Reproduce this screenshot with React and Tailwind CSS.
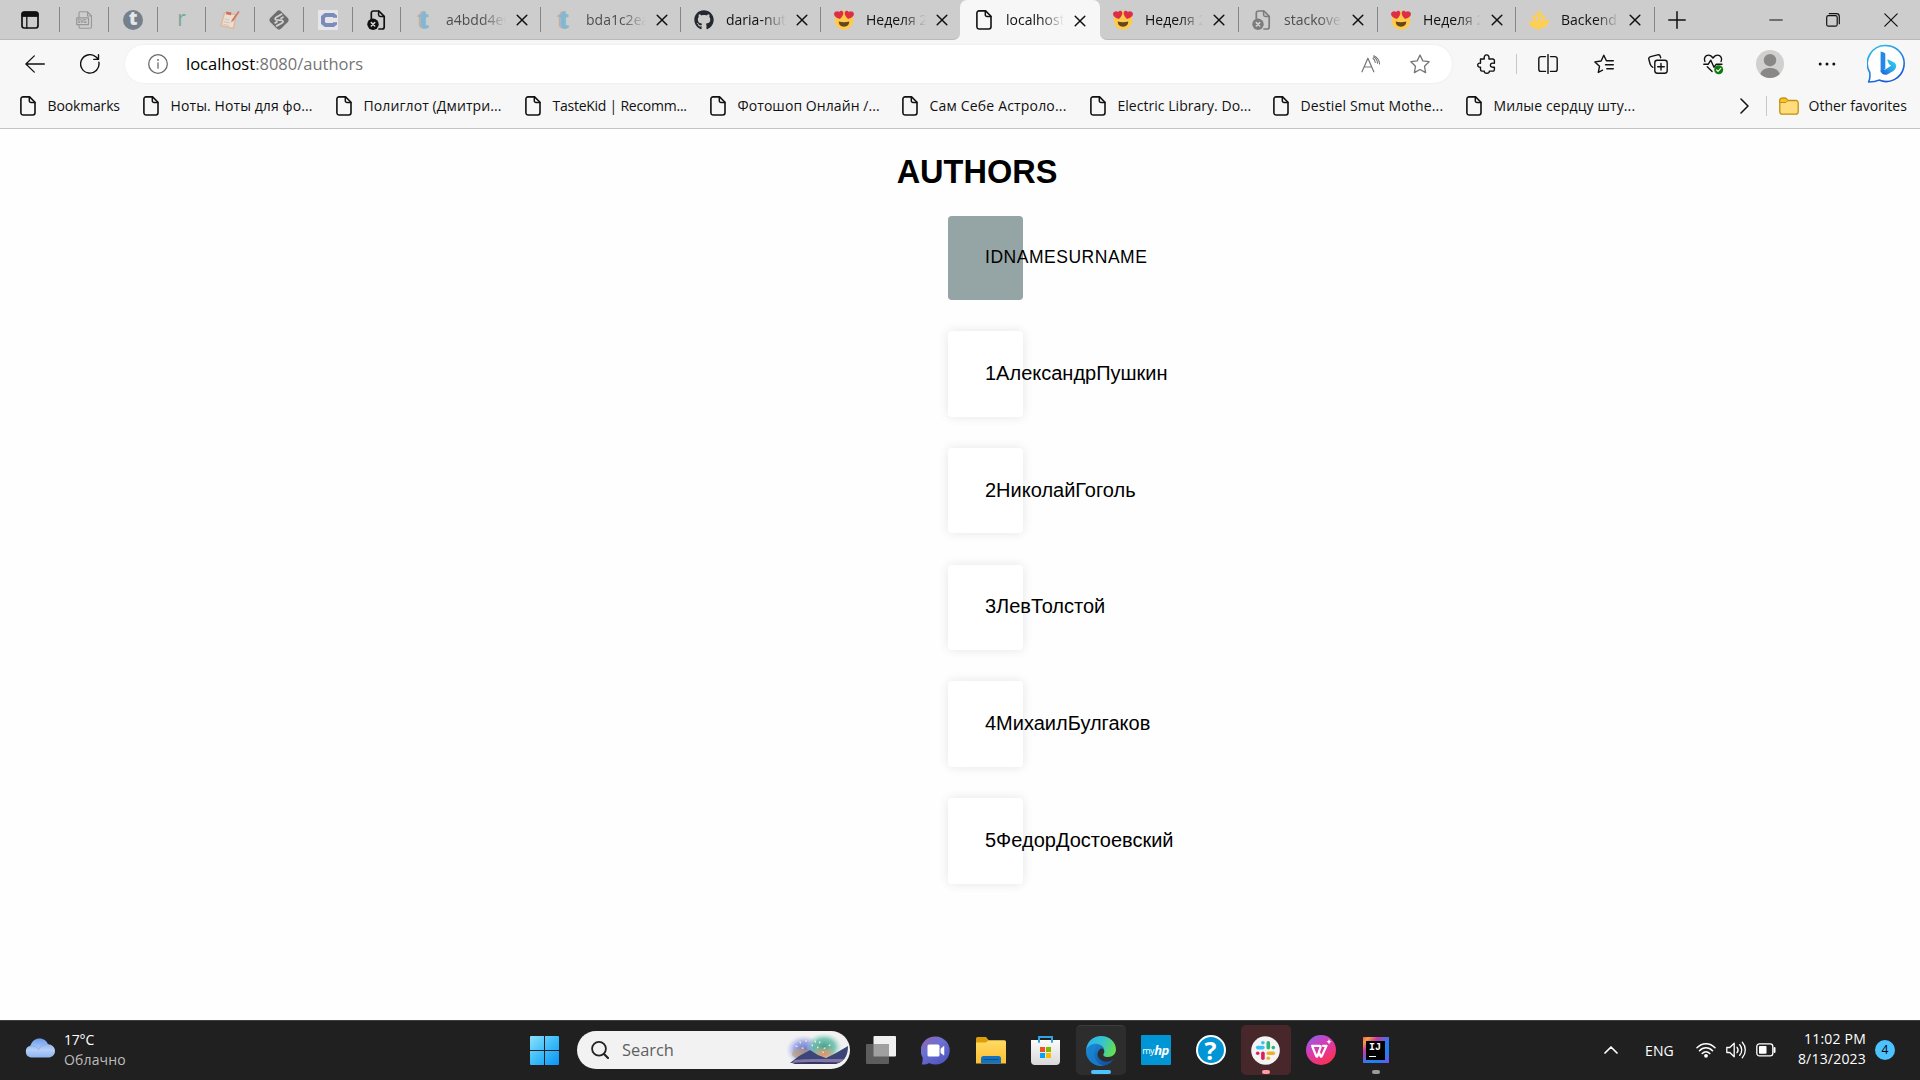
import React from 'react';
import { FaGithub } from 'react-icons/fa';

const Svg = ({ s = 20, w = s, h = s, vb, className = '', children }) => (
  <svg
    width={w}
    height={h}
    viewBox={vb || `0 0 ${w} ${h}`}
    fill="none"
    stroke="currentColor"
    strokeWidth="1.4"
    strokeLinecap="round"
    strokeLinejoin="round"
    className={'shrink-0 ' + className}
  >
    {children}
  </svg>
);

const FileIcon = () => (
  <Svg w={16} h={20}>
    <path d="M3 .9h6.6l5.4 5.4v10.5a2.2 2.2 0 0 1-2.2 2.2H3A2.2 2.2 0 0 1 .9 17V3A2.1 2.1 0 0 1 3 .9Z" strokeWidth="1.6" />
    <path d="M9.3 1.2v3.6a1.7 1.7 0 0 0 1.7 1.7h3.8" strokeWidth="1.5" />
  </Svg>
);

const ErrorFile = ({ className = '' }) => (
  <Svg s={20} className={className}>
    <path d="M4.3 9V3a2 2 0 0 1 2-2h5.6l5.3 5.3V17a2 2 0 0 1-2 2H12" strokeWidth="1.7" />
    <path d="M11.6 1.3v3.4a1.7 1.7 0 0 0 1.7 1.7H17" strokeWidth="1.5" />
    <circle cx="6" cy="14.3" r="5.7" fill="currentColor" stroke="none" />
    <path d="m4.3 12.6 3.4 3.4m0-3.4L4.3 16" stroke="#d6d6d6" strokeWidth="1.5" />
  </Svg>
);

const CloseIcon = () => (
  <Svg s={12}>
    <path d="m1.2 1.2 9.6 9.6m0-9.6-9.6 9.6" strokeWidth="1.5" />
  </Svg>
);

const HeartEyes = () => (
  <Svg s={20}>
    <circle cx="10" cy="10.3" r="9.4" fill="#ffcb4c" stroke="none" />
    <path d="M4.8 11.6c3.2 1 7.200 1 10.400 0 .2 3-1.900 5.100-5.200 5.100s-5.400-2.100-5.200-5.100Z" fill="#65471b" stroke="none" />
    <path d="M9.300 2.700C8.900.6 6.200.2 5.200 2 3.700.600.700 1.200.1 3.500-.4 6.100 2.800 8.200 5.900 8.900c1.900-1.600 3.700-4 3.400-6.200ZM10.700 2.700c.4-2.100 3.100-2.500 4.100-.7 1.500-1.400 4.500-.8 5.100 1.500.5 2.600-2.700 4.700-5.800 5.400-1.900-1.600-3.700-4-3.400-6.200Z" fill="#dd2e44" stroke="none" />
  </Svg>
);

const LetterT = () => (
  <Svg s={20}>
    <text x="3.500" y="18" fontFamily="Liberation Serif, serif" fontSize="27" fontWeight="bold" fill="#c9a789" stroke="#c9ab94" strokeWidth="1">t</text>
    <text x="5" y="18.300" fontFamily="Liberation Serif, serif" fontSize="27" fontWeight="bold" fill="#86b7d0" stroke="#86b7d0" strokeWidth="1.500">t</text>
  </Svg>
);

const Backend = () => (
  <Svg s={20}>
    <path d="M10 .3 13.200 4 11 6v5.500l1.600-.9V7.800l-1-1 2.500-2.600 2.700 2.800-1.400 1.500v2.300l4.500-1.300c0 5-2.600 7.700-6.700 8L10 20l-3.200-1.500c-4.100-.3-6.700-3-6.700-8l4.500 1.300V8.500L3.200 7l2.700-2.800 2.500 2.600-1 1v2.800l1.600.9V6L6.800 4Z" fill="#ffcf54" stroke="none" />
  </Svg>
);

const PINNED = [
  {
    w: 'w-[60px]',
    icon: (
      <Svg w={18} h={18}>
        <rect x="1" y="1" width="16" height="16" rx="2.200" strokeWidth="1.700" />
        <path d="M1 5V3a2 2 0 0 1 2-2h12a2 2 0 0 1 2 2v2Z" fill="currentColor" strokeWidth="1" />
        <path d="M5.800 5v12" strokeWidth="1.300" />
      </Svg>
    ),
  },
  {
    w: 'w-[49px]',
    icon: (
      <Svg w={17} h={18} className="text-[#989898]">
        <path d="M3 6.500V2a1.200 1.200 0 0 1 1.200-1.200h7.300l4 4V16a1.200 1.200 0 0 1-1.200 1.200H4.200A1.200 1.200 0 0 1 3 16v-2M11.500 1v4h4" strokeWidth="1.100" />
        <rect x=".7" y="6.800" width="11.800" height="6.800" strokeWidth="1.200" />
        <text x="1.500" y="12" fontFamily="Open Sans, sans-serif" fontSize="4.800" fontWeight="bold" fill="#8f8f8f" stroke="none">SVG</text>
      </Svg>
    ),
  },
  {
    w: 'w-[49px]',
    icon: (
      <span className="flex h-5 w-5 items-start justify-center rounded-full bg-[#75808c] text-[19px] leading-[17px] font-extrabold text-[#e4e6e8]">t</span>
    ),
  },
  { w: 'w-[48px]', icon: <span className="-mt-1 text-[21px] leading-5 font-medium text-[#78a797]">r</span> },
  {
    w: 'w-[49px]',
    icon: (
      <Svg s={20}>
        <path d="m4.500 2.500 11.500 2.300-2.400 13.700L1 15.800Z" fill="#e9dfd4" stroke="#dfb99f" strokeWidth="1.600" />
        <path d="m6.500 1.500 5 1-.6 2.800-5-1Z" fill="#cf6f62" stroke="none" />
        <path d="M18.200 1 12 9.500l-1 3 2.500-1.800L19.500 2Z" fill="#cf7866" stroke="none" />
        <path d="m5 9 4 1m-4.600 1.800 5 1m-5.600 1.600 5 1.200" stroke="#cdbdae" strokeWidth=".9" />
      </Svg>
    ),
  },
  {
    w: 'w-[49px]',
    icon: (
      <Svg s={20}>
        <path d="M7.800 1.400a3.200 3.200 0 0 1 4.400 0l6.400 6.400a3.200 3.200 0 0 1 0 4.400l-6.400 6.400a3.200 3.200 0 0 1-4.400 0l-6.400-6.400a3.200 3.200 0 0 1 0-4.400Z" fill="#6e6e6e" stroke="none" />
        <path d="M12.500 4.300 7.300 7.200c-1.500.9-1.500 2-.2 2.700l5.800.4c1.500.7 1.500 1.900.1 2.700l-5.300 2.900M13.900 7.300l-1.800 1M6.200 12.900l1.800-1" stroke="#d2d2d2" strokeWidth="1.800" />
      </Svg>
    ),
  },
  {
    w: 'w-[49px]',
    icon: (
      <span className="flex h-5 w-5 items-center justify-center bg-[#e6e6e8]">
        <Svg w={17} h={14}>
          <path d="M15 4.800V3.500L13.200 2H5.500L3 4v6l2.500 2h7.700L15 10.500V9.200" stroke="#7b8cbc" strokeWidth="4" strokeLinecap="butt" strokeLinejoin="miter" />
        </Svg>
      </span>
    ),
  },
  { w: 'w-[48px]', icon: <ErrorFile /> },
];

const TABS_LEFT = [
  { label: 'a4bdd4e6', icon: <LetterT />, dim: true, w: 'w-[140px]' },
  { label: 'bda1c2ea', icon: <LetterT />, dim: true, w: 'w-[140px]' },
  { label: 'daria-nuts', icon: <FaGithub size={20} color="#24292f" />, w: 'w-[140px]' },
  { label: 'Неделя 2', icon: <HeartEyes />, w: 'w-[139px]', last: true },
];
const TABS_RIGHT = [
  { label: 'Неделя 2', icon: <HeartEyes />, w: 'w-[139px]' },
  { label: 'stackover', icon: <ErrorFile className="text-[#7c7c7c]" />, dim: true, w: 'w-[139px]' },
  { label: 'Неделя 2', icon: <HeartEyes />, w: 'w-[138px]' },
  { label: 'Backend3', icon: <Backend />, w: 'w-[139px]' },
];

const Divider = () => <span className="ml-auto h-[25px] w-px shrink-0 bg-[#858585]" />;

function Tab({ label, icon, dim, w, last, tight }) {
  return (
    <div className={'flex h-full shrink-0 items-center pl-[13px] ' + w}>
      <span className="flex w-5 shrink-0 justify-center">{icon}</span>
      <span
        className={
          'ml-[12px] shrink-0 overflow-hidden text-[14px] leading-5 whitespace-nowrap [mask-image:linear-gradient(to_right,black_60%,transparent)] ' +
          (tight ? 'w-[58px] ' : 'w-[60px] ') +
          (dim ? 'text-[#4e4e4e]' : 'text-[#111]')
        }
      >
        {label}
      </span>
      <span className="mt-px ml-[10px]">
        <CloseIcon />
      </span>
      {!last && <Divider />}
    </div>
  );
}

function TabStrip() {
  return (
    <div className="flex h-10 bg-[#f7f7f7]">
      <div className="flex w-[960px] items-center rounded-br-[7px] border-b border-[#b9b9b9] bg-[#cdcdcd]">
        {PINNED.map((p, i) => (
          <div key={i} className={'flex h-full shrink-0 items-center ' + p.w}>
            <span className="flex flex-1 justify-center">{p.icon}</span>
            <Divider />
          </div>
        ))}
        {TABS_LEFT.map((t, i) => (
          <Tab key={i} {...t} />
        ))}
      </div>
      <div className="w-[140px] bg-[#cdcdcd]">
        <div className="flex h-10 items-center rounded-t-[7px] bg-[#f7f7f7] pl-px">
          <Tab label="localhost:" icon={<FileIcon />} w="w-[138px]" last tight />
        </div>
      </div>
      <div className="flex flex-1 items-center rounded-bl-[7px] border-b border-[#b9b9b9] bg-[#cdcdcd]">
        {TABS_RIGHT.map((t, i) => (
          <Tab key={i} {...t} tight />
        ))}
        <Svg s={18} className="ml-[13px]">
          <path d="M9 .8v16.400M.8 9h16.400" strokeWidth="1.500" />
        </Svg>
        <Svg w={14} h={14} className="ml-[83px]">
          <path d="M.8 7h12.400" strokeWidth="1.200" />
        </Svg>
        <Svg w={14} h={14} className="ml-[43px]">
          <rect x=".7" y="2.700" width="10.500" height="10.500" rx="1.800" strokeWidth="1.200" />
          <path d="M3.300.7h7.200a2.800 2.800 0 0 1 2.800 2.800v7.200" strokeWidth="1.200" />
        </Svg>
        <Svg w={14} h={14} className="ml-[44px]">
          <path d="m.8.8 12.400 12.400m0-12.400L.8 13.200" strokeWidth="1.200" />
        </Svg>
      </div>
    </div>
  );
}

const Slot = ({ w, children }) => <div className={'flex shrink-0 items-center justify-center ' + w}>{children}</div>;

function AddressRow() {
  return (
    <div className="flex h-12 items-center">
      <div className="flex w-[125px] shrink-0 items-center pl-[25px]">
        <Svg w={20} h={18}>
          <path d="M9.300.9.9 9l8.400 8.100M1 9h18.300" strokeWidth="1.300" />
        </Svg>
        <Svg s={20} className="ml-[35px]">
          <path d="M18.900 8.300A9.200 9.200 0 1 1 15.700 2.800l2.500 2.300M18.500.8v4.600h-4.700" strokeWidth="1.400" />
        </Svg>
      </div>
      <div className="flex h-[38px] w-[1327px] shrink-0 items-center rounded-full bg-white shadow-[0_0_3px_rgba(0,0,0,0.06)]">
        <Svg s={20} className="ml-[23px] text-[#6b6b6b]">
          <circle cx="10" cy="10" r="9.300" strokeWidth="1.300" />
          <path d="M10 9v5.200" strokeWidth="1.300" />
          <circle cx="10" cy="6" r=".9" fill="currentColor" stroke="none" />
        </Svg>
        <span className="ml-[18px] text-[16.500px] leading-6 text-[#757575]">
          <span className="text-black">localhost</span>:8080/authors
        </span>
        <Svg w={20} h={18} className="mr-[29px] ml-auto text-[#767676]">
          <path d="m1 16.800 5.900-13.600 5.900 13.600M3 12h7.800" strokeWidth="1.200" />
          <path d="M12 3.500c1.500.8 2.200 2.300 2.200 4M12.800.8c3.500 1.500 5.500 4.200 5.800 8.200M12.300 2.100c2.600 1 4 3.200 4.200 6" strokeWidth="1.100" />
        </Svg>
        <Svg s={20} className="mr-[22px] text-[#767676]">
          <path d="m10 1 2.800 5.900 6.300.8-4.600 4.500 1.100 6.400L10 15.500l-5.600 3.100 1.100-6.400L.9 7.700l6.300-.8Z" strokeWidth="1.300" />
        </Svg>
      </div>
      <Slot w="w-[70px]">
        <Svg s={20}>
          <path d="M3.500 5h3.800c-.6-2.500.6-4.100 2.300-4.100S12.500 2.500 11.900 5h4a1.500 1.500 0 0 1 1.500 1.500v2.800c-2.500-.5-4 .3-4 1.900s1.500 2.500 4 1.900v2.500a1.500 1.500 0 0 1-1.500 1.500h-3.600c.2 1.500-.8 2.200-2.500 2.200s-2.700-.8-2.500-2.200H5a1.500 1.500 0 0 1-1.500-1.500v-2.500C1.700 13.300.7 12.500.7 11.100s1-2.300 2.800-1.900Z" strokeWidth="1.400" />
        </Svg>
      </Slot>
      <span className="ml-[-6px] h-5 w-px shrink-0 bg-[#c6c6c6]" />
      <Slot w="w-[61px]">
        <Svg w={20} h={20}>
          <path d="M7.500 2.600H3A2.200 2.200 0 0 0 .8 4.800v10.400A2.200 2.200 0 0 0 3 17.400h4.500M12.500 2.600H17a2.200 2.200 0 0 1 2.200 2.200v10.400a2.200 2.200 0 0 1-2.200 2.200h-4.500M10 .6v18.800" strokeWidth="1.400" />
        </Svg>
      </Slot>
      <Slot w="w-[51px]">
        <Svg w={20} h={20}>
          <path d="M8.500 16.200 4.300 18.500l1.200-6.200L.9 7.900l6.200-.9L9.800 1.200l2.600 5.500M12.800 6.700h6.500M11.500 10.700h7.800M12.800 14.700h6.500" strokeWidth="1.400" />
        </Svg>
      </Slot>
      <Slot w="w-[58px]">
        <Svg w={20} h={20}>
          <rect x="6.800" y="6.300" width="12.400" height="12.900" rx="2.400" strokeWidth="1.400" />
          <path d="M13 9.500v6.500M9.700 12.700h6.600M4.800 13.300C3 12.500 2.600 11.800 2.200 10.200L.9 5.500c-.4-1.500.3-2.500 1.800-2.900L9.500.9c1.600-.4 2.500.3 2.900 1.800l.3 1" strokeWidth="1.400" />
        </Svg>
      </Slot>
      <Slot w="w-[52px]">
        <Svg w={21} h={21}>
          <path d="M1.900 7.500C.4 4.200 2.400 1.100 5.400 1.100c2 0 3.500 1.300 4.600 3 1.100-1.700 2.600-3 4.600-3 3 0 5 3.100 3.500 6.400M.8 10.200h4.500l2.500-4 3.200 7 2.300-3h5.700M4.300 12.800l4.800 4.700" strokeWidth="1.400" />
          <circle cx="15.700" cy="15.800" r="4.500" fill="#0f7b0f" stroke="none" />
          <path d="m13.600 16 1.400 1.400 2.800-3" stroke="#fff" strokeWidth="1.100" />
        </Svg>
      </Slot>
      <Slot w="w-[61px]">
        <Svg s={28}>
          <circle cx="14" cy="14" r="14" fill="#d2d0ce" stroke="none" />
          <circle cx="14" cy="10.200" r="6.200" fill="#8a8886" stroke="none" />
          <path d="M4.300 24c1.500-4.500 5.300-6 9.700-6s8.200 1.500 9.700 6A14 14 0 0 1 4.300 24Z" fill="#8a8886" stroke="none" />
        </Svg>
      </Slot>
      <Slot w="w-[54px]">
        <Svg w={18} h={4}>
          <g fill="currentColor" stroke="none">
            <circle cx="2.200" cy="2" r="1.500" />
            <circle cx="9" cy="2" r="1.500" />
            <circle cx="15.800" cy="2" r="1.500" />
          </g>
        </Svg>
      </Slot>
      <Slot w="w-[66px]">
        <Svg s={40}>
          <defs>
            <linearGradient id="bingRing" x1="0" y1="0" x2=".5" y2="1">
              <stop offset="0" stopColor="#2fc6ee" />
              <stop offset="1" stopColor="#1d58d8" />
            </linearGradient>
            <linearGradient id="bingB" x1="1" y1="0" x2="0" y2="1">
              <stop offset="0" stopColor="#35d3ee" />
              <stop offset=".5" stopColor="#2aa5ea" />
              <stop offset="1" stopColor="#2257d8" />
            </linearGradient>
          </defs>
          <path d="M20.200 1.600A18 18 0 1 1 12 36.100c-2.600 1.300-6.200 1.900-10.400 1.900 1.500-2.500 1.600-5.500 1.200-9.500A18 18 0 0 1 20.200 1.600Z" fill="#fff" stroke="url(#bingRing)" strokeWidth="1.600" />
          <path d="m13.600 7.500 3.200 1.100c1 .4 1.500 1 1.500 2v14.200l-4.700 3.800Z" fill="#2388ea" stroke="none" />
          <path d="M13.600 26.500c.5 3.500 3.900 5.500 7.200 3.700l5.500-3.200c3.400-2 4.100-6.800.5-8.700l-5.500-2.700c-.7-.3-1.200.3-.9 1l1.700 3.700 2.200 1.300-6 3.800Z" fill="url(#bingB)" stroke="none" />
        </Svg>
      </Slot>
    </div>
  );
}

const BOOKMARKS = [
  ['Bookmarks', 'w-[123px]', 'tracking-[-0.15px]'],
  ['Ноты. Ноты для фо...', 'w-[193px]', 'tracking-[0.1px]'],
  ['Полиглот (Дмитри...', 'w-[189px]', 'tracking-[0.1px]'],
  ['TasteKid | Recomm...', 'w-[185px]', 'tracking-[-0.25px]'],
  ['Фотошоп Онлайн /...', 'w-[192px]', 'tracking-[0.07px]'],
  ['Сам Себе Астроло...', 'w-[188px]', 'tracking-[0.18px]'],
  ['Electric Library. Do...', 'w-[183px]', 'tracking-[0.03px]'],
  ['Destiel Smut Mothe...', 'w-[193px]', 'tracking-[0.15px]'],
  ['Милые сердцу шту...', 'w-[200px]', 'tracking-[0.12px]'],
];

function BookmarkBar() {
  return (
    <div className="flex h-[41px] items-center border-b border-[#c3c3c3] pb-[5px] pl-5 text-[14px] text-[#111]">
      {BOOKMARKS.map(([label, w, tr]) => (
        <div key={label} className={'flex shrink-0 items-center whitespace-nowrap ' + w}>
          <FileIcon />
          <span className={'ml-[11.500px] ' + tr}>{label}</span>
        </div>
      ))}
      <Svg w={9} h={16} className="ml-[74px]">
        <path d="m1 1 7 7-7 7" strokeWidth="1.500" />
      </Svg>
      <span className="ml-[17px] h-5 w-px bg-[#c9c9c9]" />
      <Svg w={20} h={18} className="ml-[12px]">
        <path d="M.8 3.500A2.300 2.300 0 0 1 3 1.200h3.800l2.200 2.300h8a2.200 2.200 0 0 1 2.200 2.200V15a2.200 2.200 0 0 1-2.200 2.200H3A2.200 2.200 0 0 1 .8 15Z" fill="#ffdc7c" stroke="#c29012" strokeWidth="1.300" />
        <path d="M1 5.500h6L9 3.500 6.800 1.200H3A2.200 2.200 0 0 0 .8 3.500Z" fill="#f5c426" stroke="#c29012" strokeWidth="1" />
      </Svg>
      <span className="ml-[9.500px] whitespace-nowrap">Other favorites</span>
    </div>
  );
}

const AUTHORS = ['1АлександрПушкин', '2НиколайГоголь', '3ЛевТолстой', '4МихаилБулгаков', '5ФедорДостоевский'];

function Page() {
  return (
    <main className="h-[891px] bg-[#fefefe] pt-6 font-['Liberation_Sans',Arial,sans-serif] text-black">
      <h2 className="pl-[34px] text-center text-[32.500px] leading-[38px] font-bold">AUTHORS</h2>
      <ul className="ml-[948px] flex w-[75px] flex-col gap-[31.250px] pt-[25px]">
        <li className="flex h-[83.750px] items-center rounded-[3.750px] bg-[#95a5a6] pb-[2px] pl-[37px] text-[17.500px] tracking-[0.525px] whitespace-nowrap">
          IDNAMESURNAME
        </li>
        {AUTHORS.map((a) => (
          <li key={a} className="flex h-[85.500px] items-center rounded-[3.750px] bg-white pb-[2px] pl-[37px] text-[20px] whitespace-nowrap shadow-[0_0_11px_rgba(0,0,0,0.1)]">
            {a}
          </li>
        ))}
      </ul>
    </main>
  );
}

const Tile = ({ bg = '', bar, children }) => (
  <div className={'relative flex h-[50px] w-[50px] shrink-0 items-center justify-center rounded-[5px] ' + bg}>
    {children}
    {bar && <span className={'absolute bottom-px h-1 rounded-full ' + bar} />}
  </div>
);

const StartIcon = () => (
  <Svg s={29}>
    <defs>
      <linearGradient id="win" x1="0" y1="0" x2="29" y2="29" gradientUnits="userSpaceOnUse">
        <stop offset="0" stopColor="#8de1fb" />
        <stop offset=".5" stopColor="#3dbdf8" />
        <stop offset="1" stopColor="#0b92f8" />
      </linearGradient>
    </defs>
    <path d="M0 1Q0 0 1 0h13v14H0ZM15 0h13q1 0 1 1v13H15ZM0 15h14v14H1q-1 0-1-1ZM15 15h14v13q0 1-1 1H15Z" fill="url(#win)" stroke="none" />
  </Svg>
);

const SearchArt = () => (
  <Svg w={61} h={31}>
    <defs>
      <radialGradient id="artL"><stop offset="0" stopColor="#6a70c4" /><stop offset=".55" stopColor="#8291df" stopOpacity=".75" /><stop offset="1" stopColor="#b3bdf0" stopOpacity="0" /></radialGradient>
      <radialGradient id="artR"><stop offset="0" stopColor="#3f9f8b" /><stop offset=".6" stopColor="#58b8a2" stopOpacity=".75" /><stop offset="1" stopColor="#9bd9cb" stopOpacity="0" /></radialGradient>
      <radialGradient id="artO"><stop offset="0" stopColor="#e98f63" /><stop offset="1" stopColor="#e9a77c" stopOpacity="0" /></radialGradient>
    </defs>
    <g stroke="none">
      <ellipse cx="17" cy="16" rx="18" ry="15" fill="url(#artL)" />
      <ellipse cx="37" cy="13" rx="18" ry="14" fill="url(#artR)" />
      <ellipse cx="37" cy="20" rx="13" ry="8" fill="url(#artO)" />
      <ellipse cx="14" cy="20" rx="9" ry="5" fill="#c89c66" opacity=".6" />
      <path d="M3 29 12 22l11-6 8 5 8 3 10-5 12-7c0 9-3 14-9 17H5Z" fill="#3c4577" />
      <path d="M8 26c12-1.500 35-1 49-1l-5 4H5Z" fill="#8276a6" />
      <path d="M5 29c15-1.500 28-1 48-.5L49 30H8Z" fill="#34365f" />
    </g>
    <path d="m9 12 1 .5M13 8l.5.8M19 6.500v1M15 14l1.200.2M25 11l.5.8M28 7l.5 1M31 13l-.4.8M33 8l-.5.8M38 14l-.8.3M43 11l-.8.6M36 18l.3.4" stroke="#fff4cf" strokeWidth="1.200" />
  </Svg>
);

function Taskbar() {
  return (
    <footer className="flex h-[60px] items-center bg-[#202020] text-white shadow-[inset_0_1px_0_#3d4141]">
      <div className="flex w-[519px] shrink-0 items-center pl-[25px] text-[14px] leading-5">
        <Svg w={30} h={20} className="-mt-[5px]">
          <defs>
            <linearGradient id="cloud" x1="0" y1="0" x2="0" y2="1"><stop offset="0" stopColor="#6b9bea" /><stop offset=".6" stopColor="#b5cff7" /><stop offset="1" stopColor="#8fb4f2" /></linearGradient>
          </defs>
          <path d="M6 19.500a6 6 0 0 1-.5-11.800C7 3 10.500.5 14.500.5c4.300 0 7 2.300 8.500 5.700 4 .1 7 2.900 7 6.700 0 3.900-3 6.600-7 6.600Z" fill="url(#cloud)" stroke="none" />
          <path d="M5.500 8c3.500-.8 6.500.6 8 3.500 2-3.800 5.500-5.500 9.500-5" stroke="#86aef0" strokeWidth="1" />
        </Svg>
        <div className="-mt-px ml-[9px]">
          <div className="tracking-[-0.2px]">17°C</div>
          <div className="tracking-[0.15px] text-[#bdbdbd]">Облачно</div>
        </div>
      </div>
      <Tile><StartIcon /></Tile>
      <div className="-mt-px ml-[8px] flex h-[38px] w-[273px] shrink-0 items-center rounded-full bg-[#f2f2f2]">
        <Svg s={18} className="ml-[14px] text-[#222]">
          <circle cx="8" cy="7.800" r="6.900" strokeWidth="1.800" />
          <path d="m13 13 4 4" strokeWidth="2.200" />
        </Svg>
        <span className="mt-px ml-[13px] text-[16.400px] text-[#5f5f5f]">Search</span>
        <span className="mr-[2px] ml-auto"><SearchArt /></span>
      </div>
      <div className="ml-[5.500px] flex gap-[5px]">
        <Tile>
          <Svg w={30} h={28}>
            <rect x="7.500" y="0" width="22.500" height="20.500" rx="1" fill="#f0f0f0" stroke="none" />
            <rect x="0" y="8" width="23" height="20" rx="1" fill="#5d5d5d" stroke="none" />
            <rect x="7.500" y="8" width="15.500" height="12.500" fill="#a0a0a0" stroke="none" />
          </Svg>
        </Tile>
        <Tile>
          <Svg w={29} h={29}>
            <defs><linearGradient id="chat" x1="0" y1="0" x2=".7" y2="1"><stop offset="0" stopColor="#9a63a6" /><stop offset=".45" stopColor="#6a70d4" /><stop offset="1" stopColor="#5355c0" /></linearGradient></defs>
            <path d="M14.700.5a14 14 0 1 1-6.500 26.400C6 28.300 3.500 28.700.7 28.500c.9-2.300 1-5 1-7A14 14 0 0 1 14.700.5Z" fill="url(#chat)" stroke="none" />
            <rect x="6.500" y="8.500" width="12" height="12" rx="1.500" fill="#fff" stroke="none" />
            <path d="m20 12.500 3-2.300v9L20 17Z" fill="#fff" stroke="#fff" strokeWidth=".5" />
          </Svg>
        </Tile>
        <Tile>
          <Svg w={30} h={27}>
            <defs><linearGradient id="folder" x1="0" y1="0" x2="0" y2="1"><stop offset="0" stopColor="#ffdb62" /><stop offset="1" stopColor="#fcbf33" /></linearGradient></defs>
            <path d="M0 1.500Q0 0 1.500 0H10l3 3.500V9H0Z" fill="#de9d0b" stroke="none" />
            <path d="M0 5.500h10l2.500-2.300h16Q30 3.200 30 4.700V26.500H0Z" fill="url(#folder)" stroke="none" />
            <path d="M5 21.500q0-2.500 2.500-2.500h15q2.500 0 2.500 2.500v5H5Z" fill="#1272c0" stroke="none" />
            <path d="M8 22.500h14" stroke="#0a4f8e" strokeWidth="1" />
          </Svg>
        </Tile>
        <Tile>
          <Svg w={29} h={29} className="mr-px">
            <defs><linearGradient id="store" x1="0" y1="0" x2="0" y2="1"><stop offset="0" stopColor="#fbfbfb" /><stop offset="1" stopColor="#d8d8d8" /></linearGradient></defs>
            <path d="M8 5V1h13v4" stroke="#2fa3e4" strokeWidth="2" strokeLinejoin="miter" />
            <path d="M0 4h29v21q0 4-4 4H4q-4 0-4-4Z" fill="url(#store)" stroke="none" />
            <path d="M8 4v2M21 4v2" stroke="#2fa3e4" strokeWidth="2" />
            <g stroke="none">
              <rect x="9" y="11" width="5" height="5" fill="#f25022" /><rect x="15" y="11" width="5" height="5" fill="#7fba00" />
              <rect x="9" y="17" width="5" height="5" fill="#00a4ef" /><rect x="15" y="17" width="5" height="5" fill="#ffb900" />
            </g>
          </Svg>
        </Tile>
        <Tile bg="border-t border-[#3b3b3b] bg-[#2d2d2d]" bar="w-5 bg-[#4cc2ff]">
          <Svg s={30}>
            <defs>
              <linearGradient id="edgeTop" x1="0" y1=".3" x2="1" y2=".6"><stop offset="0" stopColor="#2fb3e8" /><stop offset=".5" stopColor="#35c4cf" /><stop offset="1" stopColor="#67df4c" /></linearGradient>
              <linearGradient id="edgeBot" x1="0" y1="0" x2=".8" y2="1"><stop offset="0" stopColor="#1b8fdc" /><stop offset="1" stopColor="#114f9e" /></linearGradient>
            </defs>
            <g stroke="none">
              <path d="M0 14C1 5.500 7 0 15 0c8.500 0 15 6 15 13.500 0 4.500-3.500 7.500-8 7.500-3.500 0-5.200-1.300-4.500-3 .8-1.300 1-2.300.7-3.600C17 9 5 7 0 14Z" fill="url(#edgeTop)" />
              <path d="M0 14c2-4.500 6.500-6.500 10.500-6.200C14.500 8.200 17.800 10.500 18.300 14c-1-1.500-2.500-2-3.800-1.300C9 17 11.500 24 18 25.500c3.700.8 7-.2 9.800-2.200C25 27.500 20.500 30 15 30 6.500 30-.5 23 0 14Z" fill="url(#edgeBot)" />
              <path d="M10.700 10.500C7.500 14 7.500 20 10 24c2 3.200 5 5 8 5.700C8 31.500 0 23.500 0 15c1.500-4 6-6 10.700-4.500Z" fill="#1a85d2" opacity=".7" />
            </g>
          </Svg>
        </Tile>
        <Tile>
          <span className="flex h-[30px] w-[30px] items-center justify-center rounded-[1px] bg-[#0096d6] leading-none tracking-[-0.5px]">
            <span className="text-[9px]">my</span>
            <span className="text-[13px] font-bold italic">hp</span>
          </span>
        </Tile>
        <Tile>
          <span className="flex h-[30px] w-[30px] items-center justify-center rounded-full border-2 border-white bg-[#0096d6] text-[25px] leading-none font-bold">?</span>
        </Tile>
        <Tile bg="bg-[#472729]" bar="w-2 bg-[#ff99a4]">
          <Svg s={29}>
            <circle cx="14.500" cy="14.500" r="14.300" fill="#f4f4f4" stroke="none" />
            <g strokeWidth="3.600">
              <path d="M6.700 11.600h5.200" stroke="#36c5f0" /><path d="M11.900 6.700h0" stroke="#36c5f0" />
              <path d="M17.300 6.700v5" stroke="#2eb67d" /><path d="M22.300 11.600h0" stroke="#2eb67d" />
              <path d="M17.300 17.300h5" stroke="#ecb22e" /><path d="M17.300 22.300h0" stroke="#ecb22e" />
              <path d="M11.900 17.300v5" stroke="#e01e5a" /><path d="M6.700 17.300h0" stroke="#e01e5a" />
            </g>
          </Svg>
        </Tile>
        <Tile>
          <Svg s={30}>
            <defs><linearGradient id="wps" x1="0" y1="0" x2=".6" y2="1"><stop offset="0" stopColor="#8466f5" /><stop offset=".5" stopColor="#d83ab0" /><stop offset="1" stopColor="#fb3157" /></linearGradient></defs>
            <circle cx="15" cy="15" r="15" fill="url(#wps)" stroke="none" />
            <path d="M6 10.800h7.500q1.500 0 1 1.500L11.500 21q-.6 1.400-1.300 0L6.300 11.500M13.500 18.500l1 2.600q.6 1.400 1.300 0L20.500 10.800H17" stroke="#fff" strokeWidth="2.200" />
            <path d="m23 4 .8 1.900 1.900.8-1.900.8L23 9.400l-.8-1.900-1.900-.8 1.900-.8Z" fill="#fff" stroke="none" />
          </Svg>
        </Tile>
        <Tile bar="w-2 bg-[#9a9a9a]">
          <span className="flex h-[26px] w-[26px] items-center justify-center bg-[linear-gradient(135deg,#fb4a60_0%,#f9a03c_12%,#c837a8_30%,#2b7df5_55%,#1f7ff0_75%,#7d4ef0_100%)]">
            <span className="flex h-[19px] w-[19px] flex-col bg-black pt-[2px] pl-[3px] font-['Liberation_Mono',monospace] text-[10px] leading-[9px] font-bold">
              IJ
              <span className="mt-[4px] h-px w-[7px] bg-white" />
            </span>
          </span>
        </Tile>
      </div>
      <Svg w={14} h={8} className="ml-[203.500px]">
        <path d="m1 7 6-6 6 6" strokeWidth="1.700" />
      </Svg>
      <span className="ml-[27px] w-[51px] text-[14px] tracking-[0.1px]">ENG</span>
      <Svg w={20} h={16}>
        <path d="M1 5.800c5-5.400 13-5.400 18 0M3.500 8.800c3.700-4 9.300-4 13 0M6.200 11.500c2.300-2.300 5.300-2.300 7.600 0" strokeWidth="1.500" />
        <circle cx="10" cy="13.800" r="1.900" fill="currentColor" stroke="none" />
      </Svg>
      <Svg w={20} h={18} className="ml-[10px]">
        <path d="M.8 6.500h3L8.200 2.200v13.600l-4.400-4.300h-3ZM11 6.300c1.300 1.600 1.300 3.800 0 5.400M13.700 3.800c2.700 3 2.700 7.400 0 10.400M16.300 1.200c4 4.500 4 11.100 0 15.600" strokeWidth="1.300" />
      </Svg>
      <Svg w={20} h={14} className="ml-[10px]">
        <rect x=".8" y=".9" width="16" height="12" rx="2.600" strokeWidth="1.300" />
        <rect x="3" y="3" width="7.500" height="7.800" rx=".8" fill="currentColor" stroke="none" />
        <path d="M18.500 5v4" strokeWidth="2" />
      </Svg>
      <div className="-mt-[2px] ml-auto text-right text-[14px] leading-5 whitespace-nowrap">
        <div className="tracking-[0.2px]">11:02 PM</div>
        <div className="tracking-[0.2px]">8/13/2023</div>
      </div>
      <span className="mr-[25px] ml-[9px] flex h-5 w-5 items-center justify-center rounded-full bg-[#4cc2ff] text-[12px] leading-none text-black">4</span>
    </footer>
  );
}

export default function App() {
  return (
    <div className="flex h-[1080px] w-[1920px] flex-col overflow-hidden bg-[#f7f7f7] font-['Open_Sans','Noto_Sans',sans-serif] text-[#111]">
      <TabStrip />
      <AddressRow />
      <BookmarkBar />
      <Page />
      <Taskbar />
    </div>
  );
}
